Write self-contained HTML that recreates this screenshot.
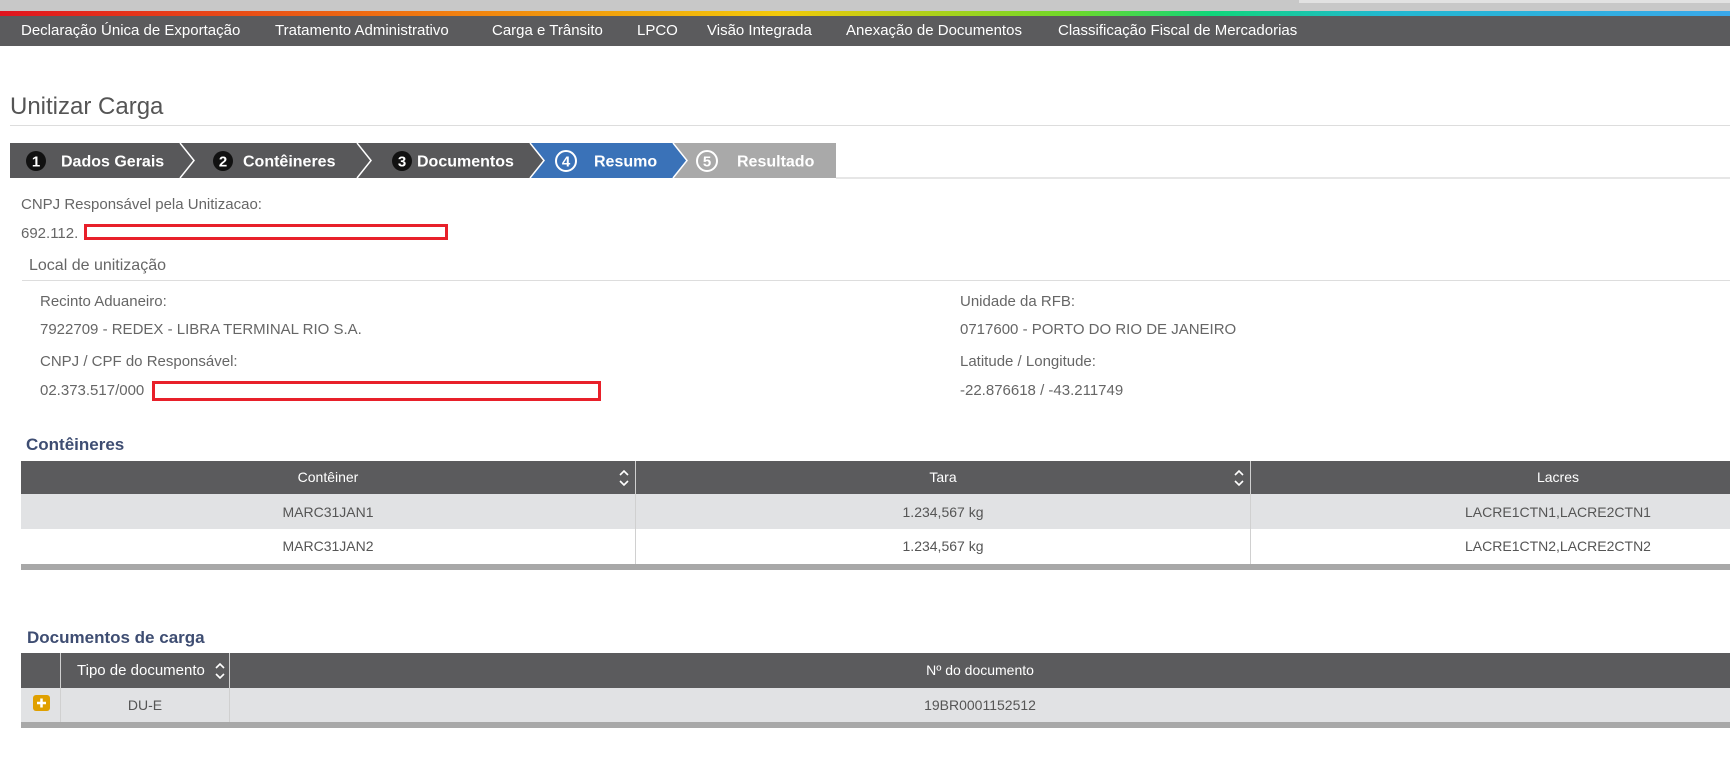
<!DOCTYPE html>
<html><head><meta charset="utf-8"><style>
*{margin:0;padding:0;box-sizing:border-box}
body{width:1730px;height:770px;overflow:hidden;background:#fff;font-family:"Liberation Sans",sans-serif;color:#666;position:relative}
.a{position:absolute;white-space:nowrap}
#top{position:absolute;left:0;top:0;width:1730px;height:11px;background:#c8c8c8}
#top2{position:absolute;left:1299px;top:0;width:431px;height:3px;background:#e2e2e2}
#grad{position:absolute;left:0;top:11px;width:1730px;height:5px;background:linear-gradient(90deg,#e0141e 0%,#f07a10 25%,#f2c90a 45%,#6ed82a 62%,#10d67a 70%,#22b8d0 80%,#3aa8ea 100%)}
#nav{position:absolute;left:0;top:16px;width:1730px;height:30px;background:#5b5b5d}
#nav span{position:absolute;top:6px;color:#fff;font-size:15px}
.lbl{font-size:15px;color:#666}
.hr{position:absolute;height:1px;background:#ddd}
.srt{position:absolute;color:#fff;width:12px;height:18px}
</style></head><body>
<div id="top"></div><div id="top2"></div><div id="grad"></div>
<div id="nav">
<span style="left:21px">Declaração Única de Exportação</span>
<span style="left:275px">Tratamento Administrativo</span>
<span style="left:492px">Carga e Trânsito</span>
<span style="left:637px">LPCO</span>
<span style="left:707px">Visão Integrada</span>
<span style="left:846px">Anexação de Documentos</span>
<span style="left:1058px">Classificação Fiscal de Mercadorias</span>
</div>
<div class="a" style="left:10px;top:93px;font-size:24px;color:#555">Unitizar Carga</div>
<div class="hr" style="left:10px;top:125px;width:1720px"></div>

<svg class="a" style="left:10px;top:143px" width="1720" height="36">
<polygon points="0,0 170,0 184,17.5 170,35 0,35" fill="#58585a"/>
<polygon points="170,0 347,0 361,17.5 347,35 170,35 184,17.5" fill="#58585a"/>
<polygon points="347,0 520,0 534,17.5 520,35 347,35 361,17.5" fill="#58585a"/>
<polygon points="520,0 663,0 677,17.5 663,35 520,35 534,17.5" fill="#3a72b8"/>
<polygon points="663,0 826,0 826,35 663,35 677,17.5" fill="#a9a9a9"/>
<polyline points="170,0 184,17.5 170,35" fill="none" stroke="#fff" stroke-width="1.5"/>
<polyline points="347,0 361,17.5 347,35" fill="none" stroke="#fff" stroke-width="1.5"/>
<polyline points="520,0 534,17.5 520,35" fill="none" stroke="#fff" stroke-width="1.5"/>
<polyline points="663,0 677,17.5 663,35" fill="none" stroke="#fff" stroke-width="1.5"/>
<line x1="826" y1="35" x2="1720" y2="35" stroke="#ccc" stroke-width="1"/>
<circle cx="26" cy="18" r="10" fill="#111"/><circle cx="213" cy="18" r="10" fill="#111"/><circle cx="392" cy="18" r="10" fill="#111"/>
<circle cx="556" cy="18" r="10" fill="none" stroke="#fff" stroke-width="2"/><circle cx="697" cy="18" r="10" fill="none" stroke="#fff" stroke-width="2"/>
<g font-family="Liberation Sans" font-weight="bold" fill="#fff" font-size="16">
<text x="26" y="23.5" text-anchor="middle" font-size="15">1</text><text x="213" y="23.5" text-anchor="middle" font-size="15">2</text><text x="392" y="23.5" text-anchor="middle" font-size="15">3</text>
<text x="556" y="23.5" text-anchor="middle" font-size="15">4</text><text x="697" y="23.5" text-anchor="middle" font-size="15">5</text>
<text x="51" y="23.5">Dados Gerais</text><text x="233" y="23.5">Contêineres</text>
<text x="407" y="23.5">Documentos</text><text x="584" y="23.5">Resumo</text><text x="727" y="23.5">Resultado</text>
</g></svg>

<div class="a lbl" style="left:21px;top:196px">CNPJ Responsável pela Unitizacao:</div>
<div class="a lbl" style="left:21px;top:225px">692.112.</div>
<div class="a" style="left:84px;top:224px;width:364px;height:16px;border:3px solid #e8202a"></div>
<div class="a lbl" style="left:29px;top:257px;font-size:16px">Local de unitização</div>
<div class="hr" style="left:22px;top:280px;width:1708px"></div>
<div class="a lbl" style="left:40px;top:293px">Recinto Aduaneiro:</div>
<div class="a lbl" style="left:40px;top:321px">7922709 - REDEX - LIBRA TERMINAL RIO S.A.</div>
<div class="a lbl" style="left:40px;top:353px">CNPJ / CPF do Responsável:</div>
<div class="a lbl" style="left:40px;top:382px">02.373.517/000</div>
<div class="a" style="left:152px;top:381px;width:449px;height:20px;border:3px solid #e8202a"></div>
<div class="a lbl" style="left:960px;top:293px">Unidade da RFB:</div>
<div class="a lbl" style="left:960px;top:321px">0717600 - PORTO DO RIO DE JANEIRO</div>
<div class="a lbl" style="left:960px;top:353px">Latitude / Longitude:</div>
<div class="a lbl" style="left:960px;top:382px">-22.876618 / -43.211749</div>

<div class="a" style="left:26px;top:435px;font-size:17px;font-weight:bold;color:#3e4d72">Contêineres</div>
<div class="a" style="left:21px;top:461px;width:1709px;height:108px">
<div class="a" style="left:0;top:0;width:1709px;height:33px;background:#5b5b5d"></div>
<div class="a" style="left:0;top:33px;width:1709px;height:35px;background:#e1e2e4"></div>
<div class="a" style="left:0;top:103px;width:1709px;height:6px;background:#a8a8a8"></div>
<div class="a" style="left:614px;top:0;width:1px;height:103px;background:#d0d0d0"></div>
<div class="a" style="left:1229px;top:0;width:1px;height:103px;background:#d0d0d0"></div>
<div class="a" style="left:0;top:8px;width:614px;text-align:center;color:#fff;font-size:14px">Contêiner</div>
<svg class="srt" style="left:597px;top:8px" viewBox="0 0 12 18"><path d="M2 6 L6 2 L10 6 M2 12 L6 16 L10 12" fill="none" stroke="#fff" stroke-width="1.6"/></svg>
<div class="a" style="left:615px;top:8px;width:614px;text-align:center;color:#fff;font-size:14px">Tara</div>
<svg class="srt" style="left:1212px;top:8px" viewBox="0 0 12 18"><path d="M2 6 L6 2 L10 6 M2 12 L6 16 L10 12" fill="none" stroke="#fff" stroke-width="1.6"/></svg>
<div class="a" style="left:1230px;top:8px;width:614px;text-align:center;color:#fff;font-size:14px">Lacres</div>
<div class="a" style="left:0;top:43px;width:614px;text-align:center;font-size:14px;color:#555">MARC31JAN1</div>
<div class="a" style="left:615px;top:43px;width:614px;text-align:center;font-size:14px;color:#555">1.234,567 kg</div>
<div class="a" style="left:1230px;top:43px;width:614px;text-align:center;font-size:14px;color:#555">LACRE1CTN1,LACRE2CTN1</div>
<div class="a" style="left:0;top:77px;width:614px;text-align:center;font-size:14px;color:#555">MARC31JAN2</div>
<div class="a" style="left:615px;top:77px;width:614px;text-align:center;font-size:14px;color:#555">1.234,567 kg</div>
<div class="a" style="left:1230px;top:77px;width:614px;text-align:center;font-size:14px;color:#555">LACRE1CTN2,LACRE2CTN2</div>
</div>

<div class="a" style="left:27px;top:628px;font-size:17px;font-weight:bold;color:#3e4d72">Documentos de carga</div>
<div class="a" style="left:21px;top:653px;width:1709px;height:75px">
<div class="a" style="left:0;top:0;width:1709px;height:35px;background:#5b5b5d"></div>
<div class="a" style="left:0;top:35px;width:1709px;height:34px;background:#e1e2e4"></div>
<div class="a" style="left:0;top:69px;width:1709px;height:6px;background:#a8a8a8"></div>
<div class="a" style="left:39px;top:0;width:1px;height:69px;background:#d0d0d0"></div>
<div class="a" style="left:208px;top:0;width:1px;height:69px;background:#d0d0d0"></div>
<div class="a" style="left:56px;top:9px;color:#fff;font-size:15px">Tipo de documento</div>
<svg class="srt" style="left:193px;top:9px" viewBox="0 0 12 18"><path d="M2 6 L6 2 L10 6 M2 12 L6 16 L10 12" fill="none" stroke="#fff" stroke-width="1.6"/></svg>
<div class="a" style="left:209px;top:9px;width:1500px;text-align:center;color:#fff;font-size:14px">Nº do documento</div>
<div class="a" style="left:12px;top:42px;width:17px;height:16px;border-radius:3px;background:#e0a000"><svg width="17" height="16"><path d="M8.5 3.5 V12.5 M4 8 H13" stroke="#fff" stroke-width="2.5"/></svg></div>
<div class="a" style="left:40px;top:44px;width:168px;text-align:center;font-size:14px;color:#555">DU-E</div>
<div class="a" style="left:209px;top:44px;width:1500px;text-align:center;font-size:14px;color:#555">19BR0001152512</div>
</div>
</body></html>
